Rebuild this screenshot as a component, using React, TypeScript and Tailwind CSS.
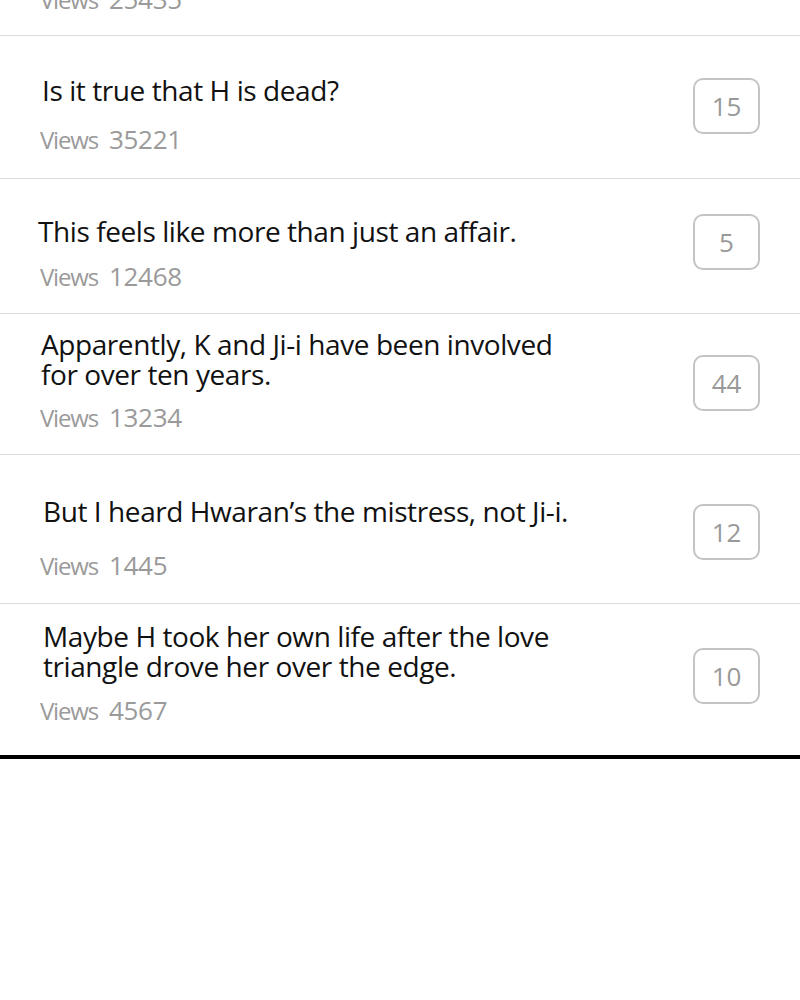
import React from 'react';

// row heights / offsets follow the reference panel
const POSTS = [
  { lines: ['Is it true that H is dead?'], views: '35221', replies: '15', h: 143, pt: 'pt-[39px]', tl: 'pl-[42px]', vgap: 'mt-[21px]', bt: 'mt-[42px]' },
  { lines: ['This feels like more than just an affair.'], views: '12468', replies: '5', h: 135, pt: 'pt-[37px]', tl: 'pl-[38px]', vgap: 'mt-[17px]', bt: 'mt-[35px]' },
  { lines: ['Apparently, K and Ji-i have been involved', 'for over ten years.'], views: '13234', replies: '44', h: 141, pt: 'pt-[15px]', tl: 'pl-[41px]', vgap: 'mt-[15px]', bt: 'mt-[41px]' },
  { lines: ['But I heard Hwaran\u2019s the mistress, not Ji-i.'], views: '1445', replies: '12', h: 149, pt: 'pt-[41px]', tl: 'pl-[43px]', vgap: 'mt-[26px]', bt: 'mt-[49px]' },
  { lines: ['Maybe H took her own life after the love', 'triangle drove her over the edge.'], views: '4567', replies: '10', h: 151, pt: 'pt-[17px]', tl: 'pl-[43px]', vgap: 'mt-[16px]', bt: 'mt-[44px]' },
];

const Views = ({ n }: { n: string }) => (
  <div className="flex items-baseline gap-[11px] text-[#9a9a9a] leading-none">
    <span className="text-[24px] tracking-[-0.05em]">Views</span>
    <span className="text-[26px] tracking-[-0.01em]">{n}</span>
  </div>
);

const Row = ({ p, last }: { p: typeof POSTS[number]; last?: boolean }) => (
  <div className={`flex items-start justify-between pr-[40px] ${last ? '' : 'border-b border-[#dcdcdc]'}`} style={{ height: p.h }}>
    <div className={p.pt}>
      <div className={`${p.tl} text-[28px] leading-[30px] text-[#111] tracking-[-0.015em]`}>
        {p.lines.map((l, i) => <div key={i}>{l}</div>)}
      </div>
      <div className={`${p.vgap} pl-[40px]`}>
        <Views n={p.views} />
      </div>
    </div>
    <div className={`${p.bt} w-[67px] h-[56px] rounded-[10px] border-2 border-[#c4c4c4] flex items-center justify-center text-[26px] text-[#999]`}>
      {p.replies}
    </div>
  </div>
);

export default function App() {
  return (
    <div className="w-[800px] h-[1000px] bg-white overflow-hidden" style={{ fontFamily: '"Open Sans", sans-serif' }}>
      <div className="h-[36px] border-b border-[#dcdcdc] pl-[40px] overflow-hidden">
        <div className="-mt-[14px]">
          <Views n="25435" />
        </div>
      </div>
      {POSTS.map((p, i) => <Row key={i} p={p} last={i === POSTS.length - 1} />)}
      <div className="h-[4px] bg-black" />
    </div>
  );
}
